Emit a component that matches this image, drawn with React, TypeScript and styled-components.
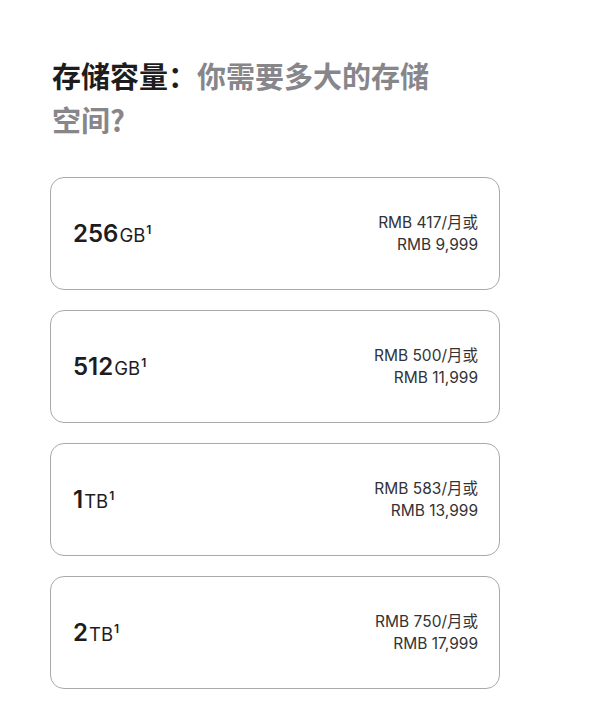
import React from 'react'
import styled, { createGlobalStyle } from 'styled-components'

type Option = {
  size: string
  unit: string
  monthly: string
  total: string
}

const options: Option[] = [
  { size: '256', unit: 'GB', monthly: 'RMB 417/月或', total: 'RMB 9,999' },
  { size: '512', unit: 'GB', monthly: 'RMB 500/月或', total: 'RMB 11,999' },
  { size: '1', unit: 'TB', monthly: 'RMB 583/月或', total: 'RMB 13,999' },
  { size: '2', unit: 'TB', monthly: 'RMB 750/月或', total: 'RMB 17,999' },
]

const GlobalStyle = createGlobalStyle`
  body {
    margin: 0;
    background: #fff;
    font-family: Inter, "Noto Sans CJK SC", sans-serif;
    -webkit-font-smoothing: antialiased;
  }
`

const App: React.FC = () => (
  <>
    <GlobalStyle />
    <Page>
      <Heading>
        <strong>存储容量：</strong>你需要多大的存储空间?
      </Heading>
      <OptionList>
        {options.map(opt => (
          <OptionCard key={opt.size + opt.unit}>
            <Capacity>
              {opt.size}
              <Unit>{opt.unit}</Unit>
              <Note>1</Note>
            </Capacity>
            <Price>
              <span>{opt.monthly}</span>
              <span>{opt.total}</span>
            </Price>
          </OptionCard>
        ))}
      </OptionList>
    </Page>
  </>
)

export default App

const Page = styled.div`
  width: 600px;
  padding: 53px 0 0 50px;
  box-sizing: border-box;
`
const Heading = styled.h2`
  margin: 0 0 36px 2px;
  width: 395px;
  font-family: "Noto Sans CJK SC", sans-serif;
  font-size: 29px;
  line-height: 44px;
  font-weight: 600;
  color: #86868b;

  strong {
    color: #1d1d1f;
    font-weight: 700;
  }
`
const OptionList = styled.div`
  display: flex;
  flex-direction: column;
  gap: 20px;
  width: 450px;
`
const OptionCard = styled.div`
  height: 113px;
  box-sizing: border-box;
  border: 1px solid #a9a9ad;
  border-radius: 14px;
  display: flex;
  align-items: center;
  justify-content: space-between;
  padding: 0 21px 0 22px;
`
const Capacity = styled.div`
  font-size: 24px;
  font-weight: 600;
  color: #1d1d1f;
`
const Unit = styled.span`
  font-size: 18.5px;
  font-weight: 400;
  margin-left: 1px;
`
const Note = styled.sup`
  font-size: 12px;
  font-weight: 600;
  vertical-align: 8px;
  margin-left: 1px;
`
const Price = styled.div`
  display: flex;
  flex-direction: column;
  align-items: flex-end;
  font-family: Inter, "Noto Sans CJK SC", sans-serif;
  font-size: 15.5px;
  line-height: 22px;
  color: #333336;
`
